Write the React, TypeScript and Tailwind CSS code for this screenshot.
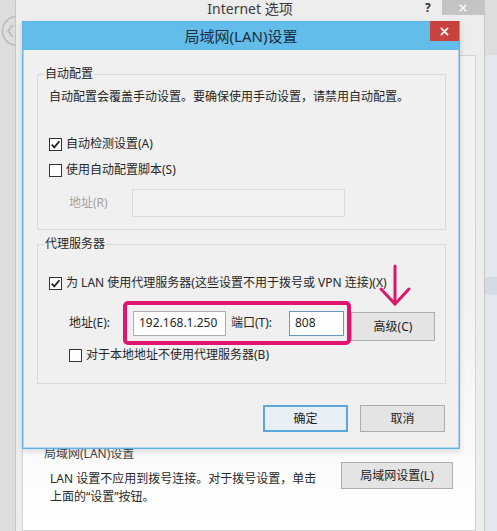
import React from 'react';

const FONT = "font-['Noto_Sans','Noto_Sans_CJK_SC',sans-serif]";

// ─── 小部件 ──────────────────────────────────────────────
const CheckBox = ({ checked, label }: { checked?: boolean; label: string }) => (
  <div className="flex items-center h-[16px] leading-[16px]">
    <span className="w-[13px] h-[13px] border border-[#333] bg-white flex items-center justify-center">
      {checked && (
        <svg width="11" height="11" viewBox="0 0 11 11">
          <path d="M1.8 5.6 L4.3 8.4 L9.4 2.2" fill="none" stroke="#1f1f1f" strokeWidth="1.8" />
        </svg>
      )}
    </span>
    <span className="ml-[4px] whitespace-nowrap">{label}</span>
  </div>
);

const WinButton = ({ label, primary, className = '' }: { label: string; primary?: boolean; className?: string }) => (
  <div
    className={`flex items-center justify-center text-[12px] leading-[16px] text-[#222] ${
      primary ? 'border-2 border-[#5aa7dc] bg-[#e7eef4]' : 'border border-[#adadad] bg-[#e4e4e4]'
    } ${className}`}
  >
    {label}
  </div>
);

const CloseX = ({ size = 9, color = '#fff' }: { size?: number; color?: string }) => (
  <svg width={size} height={size} viewBox="0 0 10 10">
    <path d="M1 1 L9 9 M9 1 L1 9" stroke={color} strokeWidth="1.8" />
  </svg>
);
// ──────────────────────────────────────────────────────────

const LanDialog = () => (
  <div className="absolute left-[22px] top-[21px] w-[438px] border border-[#5db4e4] flex flex-col shadow-[0_3px_6px_rgba(0,0,0,0.12)]">
    {/* 标题栏 */}
    <div className="relative h-[28px] bg-[#63bdea] flex items-center justify-center">
      <span className="text-[15px] leading-[20px] text-[#1c2e3c]">局域网(LAN)设置</span>
      <div className="absolute right-0 top-[-1px] w-[29px] h-[20px] bg-[#c8433d] flex items-center justify-center">
        <CloseX />
      </div>
    </div>

    {/* 内容 */}
    <div className="bg-[#f0f0f0] border-x border-b border-[#a8d6f1] pl-[13px] pr-[12px] pt-[16px] pb-[15px] text-[12px] leading-[16px] text-[#262626]">
      <fieldset className="border border-[#d9d9d9]">
        <legend className="ml-[6px] px-[1px] leading-[16px]">自动配置</legend>
        <div className="pl-[11px] pb-[12px]">
          <p className="mt-[7px] whitespace-nowrap">自动配置会覆盖手动设置。要确保使用手动设置，请禁用自动配置。</p>
          <div className="mt-[31px]">
            <CheckBox checked label="自动检测设置(A)" />
          </div>
          <div className="mt-[10px]">
            <CheckBox label="使用自动配置脚本(S)" />
          </div>
          <div className="mt-[11px] flex items-center">
            <span className="w-[83px] pl-[20px] text-[#a3a3a3]">地址(R)</span>
            <div className="w-[213px] h-[28px] border border-[#dadada] bg-[#f2f2f2]" />
          </div>
        </div>
      </fieldset>

      <fieldset className="mt-[6px] border border-[#d9d9d9]">
        <legend className="ml-[6px] px-[1px] leading-[16px]">代理服务器</legend>
        <div className="pl-[11px] pb-[20px]">
          <div className="mt-[23px]">
            <CheckBox checked label="为 LAN 使用代理服务器(这些设置不用于拨号或 VPN 连接)(X)" />
          </div>
          <div className="mt-[10px] flex items-center">
            <span className="w-[74px] pl-[20px]">地址(E):</span>
            <div className="h-[44px] border-[4px] border-[#e0156f] rounded-[5px] flex items-center pl-[6px] pr-[3px]">
              <div className="w-[93px] h-[25px] border border-[#abadb3] bg-white flex items-center pl-[5px] text-[12px]">
                192.168.1.250
              </div>
              <span className="w-[63px] pl-[5px]">端口(T):</span>
              <div className="w-[55px] h-[25px] border border-[#6a98c6] bg-white flex items-center pl-[5px] text-[12px]">
                808
              </div>
            </div>
            <WinButton label="高级(C)" className="mt-[7px] w-[84px] h-[29px]" />
          </div>
          <div className="mt-[2px] pl-[20px]">
            <CheckBox label="对于本地地址不使用代理服务器(B)" />
          </div>
        </div>
      </fieldset>

      <div className="mt-[21px] mr-[1px] flex justify-end gap-[12px]">
        <WinButton primary label="确定" className="w-[85px] h-[27px]" />
        <WinButton label="取消" className="w-[85px] h-[27px]" />
      </div>
    </div>
  </div>
);

const App = () => {
  return (
    <div className={`relative w-[497px] h-[531px] overflow-hidden bg-[#dcdddf] ${FONT}`}>
      {/* 桌面：返回按钮与右侧列表 */}
      <svg className="absolute left-0 top-[14px]" width="34" height="34" viewBox="0 0 34 34">
        <circle cx="17" cy="17" r="14.5" fill="none" stroke="#b9b9b9" strokeWidth="1.6" />
        <path d="M13 11 L8 17 L13 23" fill="none" stroke="#b9b9b9" strokeWidth="1.6" />
      </svg>
      <div className="absolute right-0 top-[55px] w-[12px] h-[476px] bg-[#e4e8ec] flex flex-col">
        <div className="mt-[222px] h-[18px] bg-[#d5dbe2]" />
      </div>

      {/* Internet 选项 窗口 */}
      <div className="absolute left-[15px] top-0 w-[470px] h-[531px] flex flex-col bg-[#ededed] border-x border-[#c6c6c6]">
        <div className="relative h-[21px] flex items-start justify-center pt-[1px]">
          <span className="text-[14px] leading-[16px] text-[#3a3a3a]">Internet 选项</span>
          <span className="absolute left-[409px] top-[1px] text-[12px] leading-[14px] font-bold text-[#333]">?</span>
          <div className="absolute left-[426px] top-0 w-[42px] h-[15px] bg-[#c4c4c4] flex items-center justify-center">
            <CloseX size={8} />
          </div>
        </div>
        <div className="flex-1 flex pl-[6px] pr-[8px] pt-[34px]">
          <div className="flex-1 border border-[#d3d3d3] bg-linear-to-b from-[#f3f3f3] via-[#f2f2f2] to-white pt-[390px] text-[12px] leading-[16px] text-[#2a2a2a]">
            <div className="pl-[21px] text-[#444]">局域网(LAN)设置</div>
            <div className="flex justify-between pr-[22px]">
              <div className="pl-[27px] pt-[8px] leading-[18px]">
                <p>LAN 设置不应用到拨号连接。对于拨号设置，单击</p>
                <p>上面的“设置”按钮。</p>
              </div>
              <WinButton label="局域网设置(L)" className="w-[112px] h-[27px]" />
            </div>
          </div>
        </div>
      </div>

      <LanDialog />

      {/* 标注箭头 */}
      <svg className="absolute left-[378px] top-[264px]" width="34" height="44" viewBox="0 0 34 44">
        <path d="M17 2 L17 40 M3 25 L17 40 L31 25" fill="none" stroke="#d8196c" strokeWidth="3" strokeLinecap="round" />
      </svg>
    </div>
  );
};

export default App;
